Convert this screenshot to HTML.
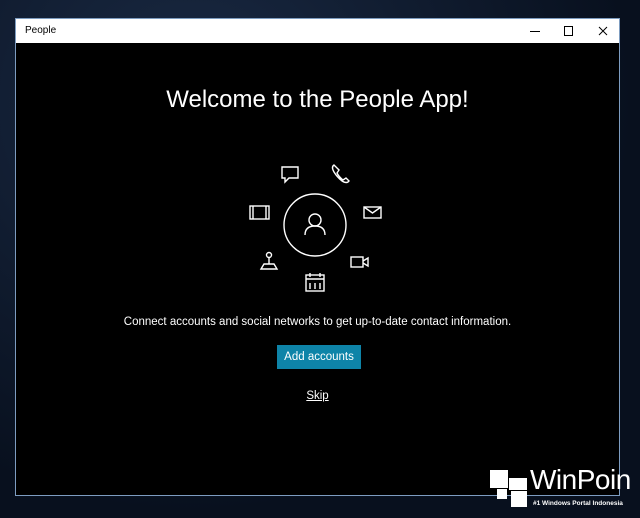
<!DOCTYPE html>
<html><head><style>
body{margin:0;width:640px;height:518px;background:radial-gradient(ellipse at 30% 20%,#1a2a44,#08101e 70%);overflow:hidden;position:relative;font-family:"Liberation Sans",sans-serif}
.win{position:absolute;left:15px;top:18px;width:603px;height:476px;border:1px solid #7d9cc0;background:#000}
.tb{height:24px;background:#fff;position:relative}
.tb span{position:absolute;left:9px;top:6px;font-size:10px;color:#000}
.t{position:absolute;left:0;width:603px;text-align:center;color:#fff}
.btn{position:absolute;left:261px;top:326px;width:84px;height:24px;background:#0e84a8;color:#fff;font-size:11.5px;text-align:center;line-height:24px}
</style></head><body>
<div class="win">
<div class="tb"><span>People</span>
<svg style="position:absolute;left:500px;top:0" width="103" height="24" fill="none" stroke="#000" stroke-width="1"><path d="M14 12.5h10"/><rect x="48.5" y="7.5" width="8" height="9"/><path d="M83 8l8 8M91 8l-8 8"/></svg></div>
<div class="t" style="top:67px;font-size:24px">Welcome to the People App!</div>
<svg style="position:absolute;left:0;top:0" width="603" height="476" fill="none" stroke="#fff" stroke-width="1.4">
<g transform="translate(-15,-18)">
<circle cx="314" cy="224" r="31"/>
<circle cx="314" cy="219" r="6"/><path d="M304 234q0-9 10-9t10 9"/>
<path d="M281 166h16v11h-9l-4 4v-4h-3z"/>
<path d="M333 164q-3 2 0 7t8 9q5 3 7 0l-3-3-3 2q-4-3-6-7l2-3z"/>
<rect x="363" y="206" width="17" height="11"/><path d="M363 206l8.5 6 8.5-6"/>
<rect x="350" y="256" width="12" height="10"/><path d="M362 260l5-3v8l-5-3"/>
<rect x="305" y="274" width="18" height="16"/><path d="M305 278h18M309 272v4M319 272v4M309 282v6M314 282v6M319 282v6"/>
<circle cx="268" cy="254" r="2.5"/><path d="M268 257v6M260 268l3-5h10l3 5z"/>
<rect x="249" y="205" width="19" height="13"/><path d="M252 205v13M265 205v13"/>
</g></svg>
<div class="t" style="top:297px;font-size:11.5px">Connect accounts and social networks to get up-to-date contact information.</div>
<div class="btn">Add accounts</div>
<div class="t" style="top:371px;font-size:11.5px;text-decoration:underline">Skip</div>
</div>
<div style="position:absolute;left:490px;top:470px;width:18px;height:18px;background:#fff"></div>
<div style="position:absolute;left:509px;top:478px;width:18px;height:12px;background:#fff"></div>
<div style="position:absolute;left:497px;top:489px;width:10px;height:10px;background:#fff"></div>
<div style="position:absolute;left:511px;top:491px;width:16px;height:16px;background:#fff"></div>
<div style="position:absolute;left:530px;top:464px;color:#fff;font-size:28px;line-height:32px;letter-spacing:-0.5px">WinPoin</div>
<div style="position:absolute;left:533px;top:500px;color:#fff;font-size:6.5px;font-weight:bold">#1 Windows Portal Indonesia</div>
</body></html>
